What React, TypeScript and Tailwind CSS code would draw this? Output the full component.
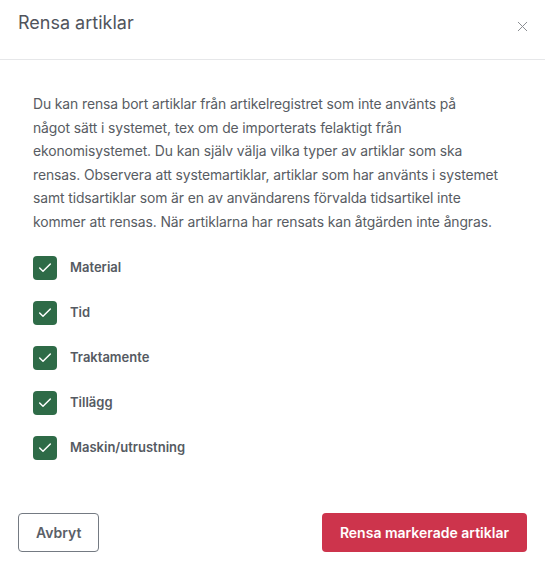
import { Check, X } from 'lucide-react'

const types = ['Material', 'Tid', 'Traktamente', 'Tillägg', 'Maskin/utrustning']

const lines = [
  'Du kan rensa bort artiklar från artikelregistret som inte använts på',
  'något sätt i systemet, tex om de importerats felaktigt från',
  'ekonomisystemet. Du kan själv välja vilka typer av artiklar som ska',
  'rensas. Observera att systemartiklar, artiklar som har använts i systemet',
  'samt tidsartiklar som är en av användarens förvalda tidsartikel inte',
  'kommer att rensas. När artiklarna har rensats kan åtgärden inte ångras.',
]

export default function App() {
  return (
    <div className="w-[545px] h-[568px] bg-white text-[#4a4f57] font-['Inter',sans-serif] flex flex-col">
      <header className="h-[60px] border-b border-[#e6e7e9] flex items-center justify-between pl-[18px] pr-[14px] pb-[14px]">
        <h2 className="text-[18px] text-[#50545c]">Rensa artiklar</h2>
        <button className="text-[#8a8d92] pt-[8px]">
          <X className="w-[17px] h-[17px]" strokeWidth={1.4} />
        </button>
      </header>

      <main className="flex-1 px-[33px] pt-[33px]">
        <p className="text-[13.9px] leading-[23.5px] text-[#585c63] tracking-[-0.1px]">
          {lines.map((l) => (
            <span key={l} className="block whitespace-nowrap">{l}</span>
          ))}
        </p>

        <div className="mt-[22px] flex flex-col gap-[21px]">
          {types.map((t) => (
            <label key={t} className="flex items-center gap-[13px]">
              <span className="w-[24px] h-[24px] rounded-[4px] bg-[#2e6b47] flex items-center justify-center">
                <Check className="w-[16px] h-[16px] text-white" strokeWidth={2.2} />
              </span>
              <span className="text-[13px] font-semibold text-[#555a62]">{t}</span>
            </label>
          ))}
        </div>
      </main>

      <footer className="flex items-center justify-between px-[18px] pb-[16px]">
        <button className="h-[39px] px-[17px] rounded-[4px] border border-[#747a82] text-[14px] font-semibold text-[#5b6068]">
          Avbryt
        </button>
        <button className="h-[39px] px-[18px] rounded-[4px] bg-[#cd344c] text-[14px] font-semibold text-white">
          Rensa markerade artiklar
        </button>
      </footer>
    </div>
  )
}
